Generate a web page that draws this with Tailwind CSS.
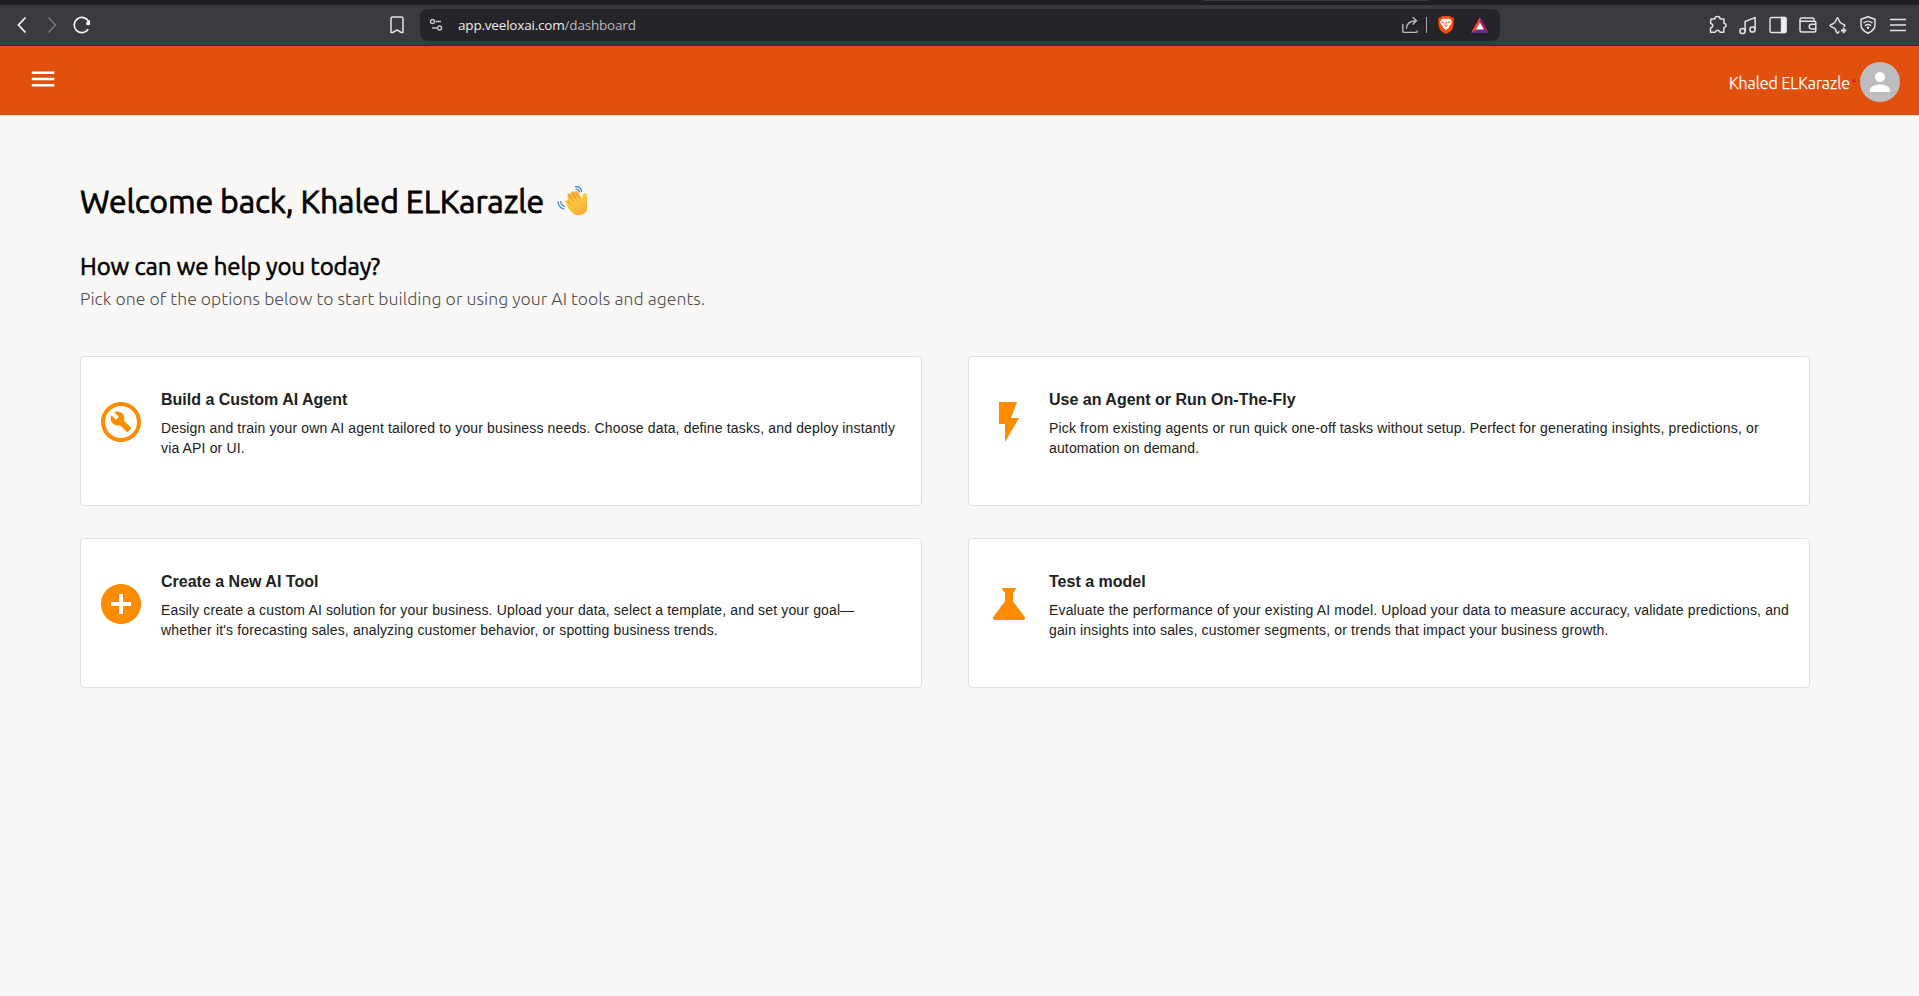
<!DOCTYPE html>
<html lang="en">
<head>
  <meta charset="UTF-8" />
  <title>Dashboard</title>
  <script src="https://cdn.jsdelivr.net/npm/@tailwindcss/browser@4"></script>
</head>
<body class="bg-[#f9f8f7] h-screen overflow-hidden font-['Ubuntu','Noto_Sans',sans-serif]">

  <!-- Browser toolbar -->
  <div class="h-[5px] bg-[#1f1e23] flex justify-start">
    <div class="ml-[1203px] h-px w-[225px] bg-[#3b3a3e]"></div>
  </div>
  <div class="h-[41px] bg-[#3b3a3e] border-b border-[#2f2e33] flex items-center text-[#ececee]">
    <div class="w-[420px] flex items-center pl-[10px]">
      <svg class="size-6" viewBox="0 0 24 24" fill="none" stroke="#f2f2f3" stroke-width="1.8"><path d="M15.5 4.5 8.5 12l7 7.5" /></svg>
      <svg class="size-6 ml-[6px]" viewBox="0 0 24 24" fill="none" stroke="#77767b" stroke-width="1.6"><path d="M8.5 4.5 15.5 12l-7 7.5" /></svg>
      <svg class="size-6 ml-[6px]" viewBox="0 0 24 24" fill="none" stroke="#f2f2f3" stroke-width="1.7"><path d="M18.2 16.2A7.6 7.6 0 1 1 18.6 8.6" /><path d="M20 6.5v5h-4.2z" fill="#f2f2f3" stroke="none" /><circle cx="18.2" cy="10.2" r="2" fill="#f2f2f3" stroke="none" /></svg>
      <svg class="size-6 ml-[291px]" viewBox="0 0 24 24" fill="none" stroke="#e4e4e6" stroke-width="1.5" stroke-linejoin="round"><path d="M6 5.5a1.5 1.5 0 0 1 1.5-1.5h9a1.5 1.5 0 0 1 1.5 1.5V19.5h-1.8L12 16.8 7.8 19.5H6z" /></svg>
    </div>

    <div class="w-[1080px] h-8 rounded-lg bg-[#252429] flex items-center pl-2">
      <svg class="size-4" viewBox="0 0 16 16" fill="none" stroke="#c4c4c8" stroke-width="1.4"><circle cx="4.5" cy="4.5" r="2" /><path d="M7.5 4.5H13M4 11h5" /><circle cx="11.6" cy="11" r="2" /></svg>
      <div class="ml-[14px] font-['Open_Sans','Noto_Sans',sans-serif] text-[13.5px] leading-5 whitespace-nowrap tracking-[-0.19px]">app.veeloxai.com<span class="text-[#b9b9be]">/dashboard</span></div>
      <div class="ml-auto flex items-center pr-[11px]">
        <svg class="size-5" viewBox="0 0 20 20" fill="none" stroke="#b9b9be" stroke-width="1.4"><path d="M2.8 9v7.2a1.2 1.2 0 0 0 1.2 1.2h12a1.2 1.2 0 0 0 1.2-1.2V15.5" /><path d="M6.5 13.8C6.5 8.5 9.5 6 16 5.8M12.6 2.3l3.9 3.5-3.9 3.7" /></svg>
        <div class="w-px h-4 bg-[#a5a5aa] ml-[6px]"></div>
        <svg class="w-4 h-[18px] ml-[11px]" viewBox="0 0 16 18"><path d="M4 0h8l1.5 1.5 1.8.2.7 2-.6 1.5.6 1.5-1.6 6.2c-.5 1.5-2.4 2.7-6.4 5.1-4-2.4-5.9-3.6-6.4-5.1L0 6.7l.6-1.5L0 3.7l.7-2 1.8-.2z" fill="#fb4b07" /><path d="M8 3l2.5-.4 2 .8 1.5 2-1 3-2 2 .2 1L8 14l-3.2-2.6.2-1-2-2-1-3 1.5-2 2-.8z" fill="#fff" /><path d="M3.5 6l2.8.8M12.5 6l-2.8.8M8 5.5v3.6M6.3 9.3 8 10.3l1.7-1" stroke="#fb4b07" stroke-width="1" fill="none" /></svg>
        <svg class="w-[18px] h-4 ml-[17px]" viewBox="0 0 18 16"><path d="M9 0 0 16l9-5z" fill="#ff4724" /><path d="M9 0l9 16-9-5z" fill="#9e1f63" /><path d="M0 16h18l-9-5z" fill="#662d91" /><path d="M9 5.5 13 12.5H5z" fill="#fff" /></svg>
      </div>
    </div>

    <div class="ml-auto flex items-center gap-[6px] pr-[9px]">
      <svg class="size-6" viewBox="0 0 24 24" fill="none" stroke="#e4e4e6" stroke-width="1.5" stroke-linejoin="round"><path d="M5 6h3.3c.5 0 .7-.3.7-.8C9.2 3.5 10.3 3.6 11.500 3.6s2.3.2 2.5 1.8c0 .4.3.6.7.6h3.2v3.7c0 .5.3.7.7.8 1 .3 1.500.8 1.500 1.900s-.5 1.500-1.500 1.800c-.4.1-.7.3-.7.8v4.3h-3.500c-.6 0-.7-.4-.9-.9-.3-.8-.9-1.200-1.900-1.200s-1.600.4-1.900 1.200c-.2.5-.4.9-.9.9H4.500v-4c0-.5.3-.7.8-.8 1-.3 1.500-.8 1.500-1.800s-.5-1.500-1.400-1.900c-.4-.2-.9-.4-.9-.9z" /></svg>
      <svg class="size-6" viewBox="0 0 24 24" fill="none" stroke="#e4e4e6" stroke-width="1.5"><circle cx="6.5" cy="18" r="2.6" /><circle cx="16.5" cy="16.5" r="2.6" /><path d="M9.1 18V8.5L19.1 4.5v12" /></svg>
      <svg class="size-6" viewBox="0 0 24 24" fill="none" stroke="#e4e4e6" stroke-width="1.4"><rect x="4" y="4.5" width="16" height="15" rx="1.5" /><path d="M15.5 4.5H19a1 1 0 0 1 1 1v13a1 1 0 0 1-1 1h-3.5z" fill="#f2f2f3" /></svg>
      <svg class="size-6" viewBox="0 0 24 24" fill="none" stroke="#e4e4e6" stroke-width="1.5"><path d="M18 8V6.5A1.5 1.5 0 0 0 16.5 5H5.5A1.5 1.5 0 0 0 4 6.5v11A1.5 1.5 0 0 0 5.5 19h12.8a1.5 1.5 0 0 0 1.5-1.5V9.8A1.5 1.5 0 0 0 18.3 8.3H4.5" /><path d="M20 11.3h-4.5a2.3 2.3 0 0 0 0 4.6H20" /></svg>
      <svg class="size-6" viewBox="0 0 24 24" fill="none" stroke="#e4e4e6" stroke-width="1.5" stroke-linejoin="round"><path d="M13.2 18.2c-.6 1.3-1 2.1-1.7 2.1s-1.1-1.3-1.8-3.2c-.5-1.4-1-2-2.4-2.5-2-.7-3.3-1.1-3.3-2s1.3-1.3 3.3-2c1.4-.5 1.9-1.1 2.4-2.5.7-1.9 1.1-3.3 1.8-3.3s1.1 1.4 1.8 3.3c.5 1.4 1 2 2.4 2.5 2 .7 3.3 1.1 3.3 2 0 .5-.6.9-1.5 1.2" /><path d="M17.7 14.8v5.4M15 17.5h5.4" stroke-width="1.8" /></svg>
      <svg class="size-6" viewBox="0 0 24 24" fill="none" stroke="#e4e4e6" stroke-width="1.5"><path d="M12 3.7 19 6.2v5.500c0 4-3 6.800-7 8.500-4-1.700-7-4.500-7-8.500V6.200z" stroke-linejoin="round" /><path d="M7.5 10c2.6-2.1 6.4-2.1 9 0M9 12.7c1.8-1.4 4.2-1.4 6 0" stroke-width="1.3" /><circle cx="12" cy="14.8" r="1.2" fill="#e4e4e6" stroke="none" /></svg>
      <svg class="size-6" viewBox="0 0 24 24" fill="none" stroke="#e4e4e6" stroke-width="1.4"><path d="M4 6.5h16M4 12h16M4 17.5h16" /></svg>
    </div>
  </div>

  <!-- App bar -->
  <header class="h-[69px] bg-[#e2500d] flex items-center pl-7 pr-[19px] pt-[3px] shadow-[0_1px_0_#e4dfdc]">
    <svg class="size-[30px] mb-[6px]" viewBox="0 0 24 24" fill="#fff"><path d="M3 18h18v-2H3v2zm0-5h18v-2H3v2zm0-7v2h18V6H3z" /></svg>
    <div class="ml-auto flex items-center">
      <span class="text-white text-base leading-6 pt-px whitespace-nowrap font-light [-webkit-text-stroke:0.25px_white]">Khaled ELKarazle</span>
      <span class="size-1 rounded-full bg-[#e91e2f] ml-[2px] mr-1 -mt-[2px]"></span>
      <div class="size-10 rounded-full bg-[#bdbdbd] flex items-center justify-center">
        <svg class="size-[30px]" viewBox="0 0 24 24" fill="#fff"><path d="M12 12c2.21 0 4-1.79 4-4s-1.79-4-4-4-4 1.79-4 4 1.79 4 4 4zm0 2c-2.67 0-8 1.34-8 4v2h16v-2c0-2.66-5.33-4-8-4z" /></svg>
      </div>
    </div>
  </header>

  <main class="pl-20 pr-[109px] pt-[65px]">
    <h1 class="flex items-center h-[42px] text-[32px] leading-[42px] font-normal text-black whitespace-nowrap">
      <span class="tracking-[-0.15px] [-webkit-text-stroke:0.8px_black]">Welcome back, Khaled ELKarazle</span>
      <svg class="w-8 h-8 ml-[13px]" viewBox="0 0 32 32">
        <defs>
          <linearGradient id="skin" x1="0" y1="0" x2="0.4" y2="1"><stop offset="0" stop-color="#f5a936" /><stop offset="0.5" stop-color="#ffc83d" /><stop offset="1" stop-color="#fbb03b" /></linearGradient>
        </defs>
        <path d="M8.6 17.500c-.8-1.700 1-2.900 2.300-1.700L10.500 10.500c-.4-2 1.900-2.900 2.900-1.300l.6-1.500c.5-2 2.600-2 3.500-.4.800-1.800 2.700-2 3.700-.3L25 14c.5-1.500.2-3 1-4.600.8-1.500 2.500-1.600 4-.4v16c-2 3.500-5 5.500-9 5.300-3 0-5-1.300-8-5-2-2.300-3.500-4.500-4.400-7.800z" fill="url(#skin)" />
        <path d="M12.500 10.500l4.200 6.500M15.700 8.500l4.200 7M11 16l3 3.500M19 8l4 6" stroke="#d8892b" stroke-width="0.9" fill="none" stroke-linecap="round" />
        <path d="M18.500 1.600c3-.3 5.500 1.700 6.100 5M19 4c1.800.2 3 1.300 3.500 3M1 16.500c.2 3.600 2.500 6.500 6 7.500M3.700 16.500c.2 2.500 1.600 4.200 4 5" stroke="#3585c6" stroke-width="1.2" fill="none" stroke-linecap="round" />
      </svg>
    </h1>

    <h2 class="mt-[29px] h-8 text-[24px] leading-8 tracking-[-0.1px] text-black whitespace-nowrap [-webkit-text-stroke:0.6px_black]">How can we help you today?</h2>
    <p class="h-8 text-[17.6px] leading-8 tracking-[0.04px] font-light text-[#4f4f4f] whitespace-nowrap">Pick one of the options below to start building or using your AI tools and agents.</p>

    <div class="mt-[41px] grid grid-cols-2 gap-x-[46px] gap-y-8 font-['Liberation_Sans',Arial,sans-serif] text-[#212121]">
      <div class="h-[150px] bg-white border border-[#e0e0e0] rounded flex items-start p-4">
        <svg class="size-12 mt-[25px] shrink-0" viewBox="0 0 24 24" fill="#ff8c00" fill-rule="evenodd"><path d="M12 2C6.48 2 2 6.48 2 12s4.48 10 10 10 10-4.48 10-10S17.52 2 12 2zm0 18c-4.41 0-8-3.59-8-8s3.59-8 8-8 8 3.59 8 8-3.59 8-8 8z" /><path d="M13.49 11.38c.43-1.22.17-2.64-.81-3.62-1.11-1.11-2.79-1.3-4.1-.59l2.35 2.35-1.41 1.41-2.35-2.35c-.71 1.32-.52 2.99.59 4.1.98.98 2.4 1.24 3.62.81l3.41 3.41c.2.2.51.2.71 0l1.4-1.4c.2-.2.2-.51 0-.71l-3.41-3.41z" /></svg>
        <div class="ml-4 mt-[15px]">
          <h3 class="text-base leading-6 font-bold">Build a Custom AI Agent</h3>
          <p class="mt-[6px] text-sm leading-5 tracking-[0.15px] whitespace-nowrap">Design and train your own AI agent tailored to your business needs. Choose data, define tasks, and deploy instantly<br />via API or UI.</p>
        </div>
      </div>

      <div class="h-[150px] bg-white border border-[#e0e0e0] rounded flex items-start p-4">
        <svg class="size-12 mt-[25px] shrink-0" viewBox="0 0 24 24" fill="#ff8c00"><path d="M7 2v11h3v9l7-12h-4l3-8z" /></svg>
        <div class="ml-4 mt-[15px]">
          <h3 class="text-base leading-6 font-bold">Use an Agent or Run On-The-Fly</h3>
          <p class="mt-[6px] text-sm leading-5 tracking-[0.15px] whitespace-nowrap">Pick from existing agents or run quick one-off tasks without setup. Perfect for generating insights, predictions, or<br />automation on demand.</p>
        </div>
      </div>

      <div class="h-[150px] bg-white border border-[#e0e0e0] rounded flex items-start p-4">
        <svg class="size-12 mt-[25px] shrink-0" viewBox="0 0 24 24" fill="#ff8c00"><path d="M12 2C6.48 2 2 6.48 2 12s4.48 10 10 10 10-4.48 10-10S17.52 2 12 2zm5 11h-4v4h-2v-4H7v-2h4V7h2v4h4v2z" /></svg>
        <div class="ml-4 mt-[15px]">
          <h3 class="text-base leading-6 font-bold">Create a New AI Tool</h3>
          <p class="mt-[6px] text-sm leading-5 tracking-[0.15px] whitespace-nowrap">Easily create a custom AI solution for your business. Upload your data, select a template, and set your goal—<br />whether it's forecasting sales, analyzing customer behavior, or spotting business trends.</p>
        </div>
      </div>

      <div class="h-[150px] bg-white border border-[#e0e0e0] rounded flex items-start p-4">
        <svg class="size-12 mt-[25px] shrink-0" viewBox="0 0 24 24" fill="#ff8c00"><path d="M19.8 18.4 14 10.67V6.5l1.35-1.69c.26-.33.03-.81-.39-.81H9.04c-.42 0-.65.48-.39.81L10 6.5v4.17L4.2 18.4c-.49.66-.02 1.6.8 1.6h14c.82 0 1.29-.94.8-1.6z" /></svg>
        <div class="ml-4 mt-[15px]">
          <h3 class="text-base leading-6 font-bold">Test a model</h3>
          <p class="mt-[6px] text-sm leading-5 tracking-[0.15px] whitespace-nowrap">Evaluate the performance of your existing AI model. Upload your data to measure accuracy, validate predictions, and<br />gain insights into sales, customer segments, or trends that impact your business growth.</p>
        </div>
      </div>
    </div>
  </main>

</body>
</html>
